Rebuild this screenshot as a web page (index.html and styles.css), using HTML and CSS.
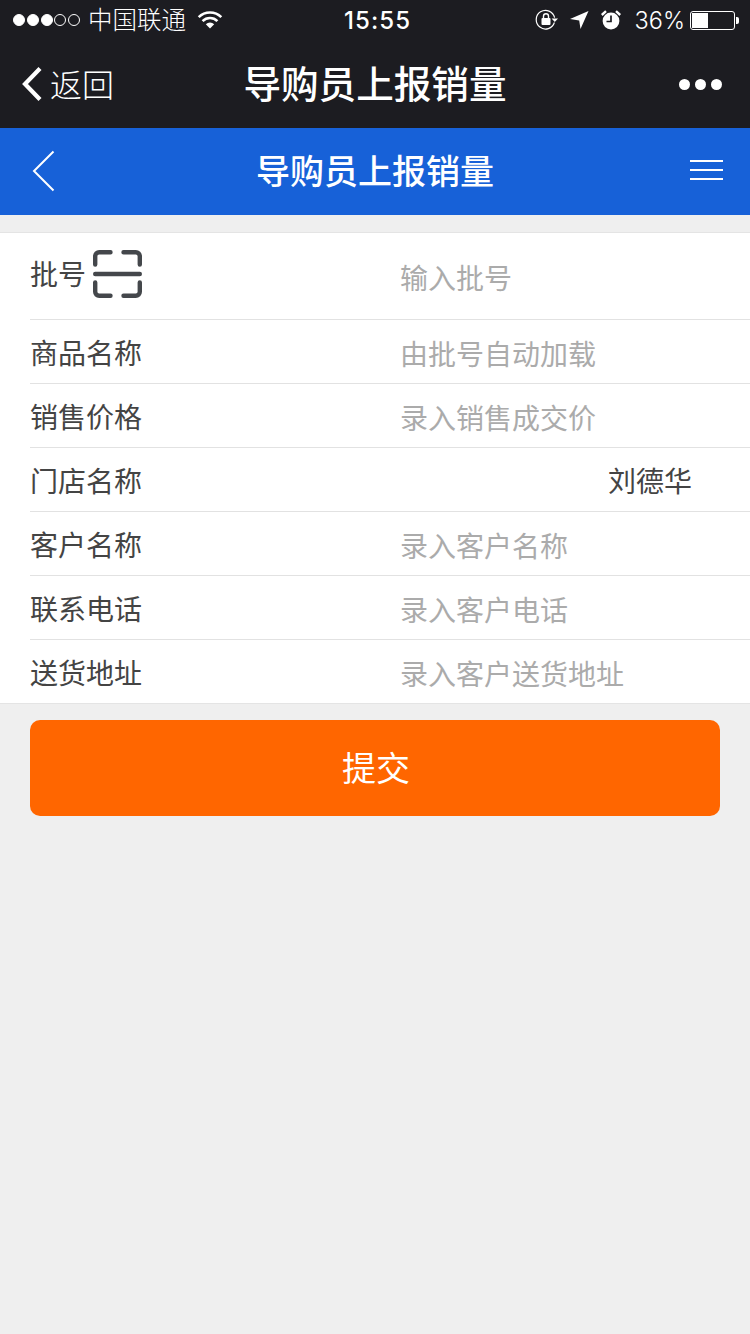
FILE: index.html
```html
<!DOCTYPE html>
<html lang="zh-CN">
<head>
    <meta charset="UTF-8">
    <meta name="viewport" content="width=device-width, initial-scale=1.0">
    <title>导购员上报销量</title>
    <link rel="stylesheet" href="styles.css">
</head>
<body>

    <div class="status-bar">
        <div class="status-left">
            <span class="signal">
                <i class="on"></i><i class="on"></i><i class="on"></i><i></i><i></i>
            </span>
            <span class="carrier">中国联通</span>
            <svg class="wifi" width="26" height="20" viewBox="0 0 26 20">
                <path d="M13 18.5 L8.8 14.3 A6 6 0 0 1 17.2 14.3 Z" fill="#fff"/>
                <path d="M5.6 11.1 A10.5 10.5 0 0 1 20.4 11.1" fill="none" stroke="#fff" stroke-width="2.6"/>
                <path d="M1.7 7.2 A16 16 0 0 1 24.3 7.2" fill="none" stroke="#fff" stroke-width="2.6"/>
            </svg>
        </div>
        <div class="status-time">15:55</div>
        <div class="status-right">
            <svg class="rotate-lock" width="24" height="22" viewBox="0 0 24 22">
                <path d="M19.4 13.5 A9.3 9.3 0 1 1 19.6 8.6" fill="none" stroke="#fff" stroke-width="1.2"/>
                <path d="M16.6 9.4 H23 L19.8 13 Z" fill="#fff"/>
                <rect x="6.5" y="9" width="9" height="7" rx="1" fill="#fff"/>
                <path d="M8.5 9 V7.2 A2.5 2.5 0 0 1 13.5 7.2 V9" fill="none" stroke="#fff" stroke-width="1.4"/>
            </svg>
            <svg class="location" width="20" height="20" viewBox="0 0 20 20">
                <path d="M19.5 1 L11.5 19 L10.2 10.4 L1 9 Z" fill="#fff"/>
            </svg>
            <svg class="alarm" width="20" height="20" viewBox="0 0 20 20">
                <circle cx="10" cy="11" r="8.4" fill="#fff"/>
                <path d="M10 5.5 V11.5 H5.5" fill="none" stroke="#1c1c21" stroke-width="1.7"/>
                <path d="M0.8 5 L5 1.2 M19.2 5 L15 1.2" stroke="#fff" stroke-width="2.4"/>
            </svg>
            <span class="battery-pct">36%</span>
            <span class="battery"><span class="battery-level"></span></span>
        </div>
    </div>

    <div class="wx-bar">
        <div class="wx-back">
            <svg width="24" height="38" viewBox="0 0 24 38">
                <path d="M20 3.5 L5 19 L20 34.5" fill="none" stroke="#fff" stroke-width="4.2"/>
            </svg>
            <span>返回</span>
        </div>
        <div class="wx-title">导购员上报销量</div>
        <div class="wx-more"><i></i><i></i><i></i></div>
    </div>

    <div class="page-bar">
        <svg class="page-back" width="24" height="42" viewBox="0 0 24 42">
            <path d="M21.5 1.5 L2 21 L21.5 40.5" fill="none" stroke="#fff" stroke-width="2"/>
        </svg>
        <div class="page-title">导购员上报销量</div>
        <div class="page-menu"><i></i><i></i><i></i></div>
    </div>

    <div class="form">
        <div class="row row-first">
            <div class="label label-scan">
                <span>批号</span>
                <svg class="scan" width="50" height="50" viewBox="0 0 50 50">
                    <path d="M18.5 3.2 H7.2 A4 4 0 0 0 3.2 7.2 V15.5 M31.5 3.2 H43.8 A4 4 0 0 1 47.8 7.2 V15.5 M3.2 33.5 V42.8 A4 4 0 0 0 7.2 46.8 H18.5 M47.8 33.5 V42.8 A4 4 0 0 1 43.8 46.8 H31.5" fill="none" stroke="#44474b" stroke-width="4.4" stroke-linecap="round"/>
                    <path d="M3.2 25 H47.8" stroke="#44474b" stroke-width="4.4" stroke-linecap="round"/>
                </svg>
            </div>
            <div class="value placeholder">输入批号</div>
        </div>
        <div class="row">
            <div class="label">商品名称</div>
            <div class="value placeholder">由批号自动加载</div>
        </div>
        <div class="row">
            <div class="label">销售价格</div>
            <div class="value placeholder">录入销售成交价</div>
        </div>
        <div class="row">
            <div class="label">门店名称</div>
            <div class="value store">刘德华</div>
        </div>
        <div class="row">
            <div class="label">客户名称</div>
            <div class="value placeholder">录入客户名称</div>
        </div>
        <div class="row">
            <div class="label">联系电话</div>
            <div class="value placeholder">录入客户电话</div>
        </div>
        <div class="row">
            <div class="label">送货地址</div>
            <div class="value placeholder">录入客户送货地址</div>
        </div>
    </div>

    <div class="submit-wrap">
        <div class="submit">提交</div>
    </div>

</body>
</html>
```

FILE: styles.css
```css
* {
    box-sizing: border-box;
}
html, body {
    margin: 0;
    padding: 0;
}
body {
    width: 750px;
    height: 1334px;
    overflow: hidden;
    background-color: #efefef;
    font-family: "Noto Sans CJK SC", "Liberation Sans", sans-serif;
    color: #444;
}

/* phone status bar */
.status-bar {
    height: 40px;
    padding: 0 15px 0 13px;
    background-color: #1c1c21;
    color: #fff;
    display: flex;
    align-items: center;
    justify-content: space-between;
    position: relative;
}
.status-left, .status-right {
    display: flex;
    align-items: center;
}
.signal {
    display: flex;
    gap: 1.75px;
}
.signal i {
    width: 12px;
    height: 12px;
    border: 1px solid #fff;
    border-radius: 50%;
}
.signal i.on {
    background-color: #fff;
}
.carrier {
    margin-left: 8px;
    margin-bottom: 2px;
    font-size: 24.5px;
    line-height: 38px;
    font-weight: 300;
}
.wifi {
    margin-left: 11px;
}
.status-time {
    position: absolute;
    left: 344px;
    top: 1px;
    font-family: "Inter", "Liberation Sans", sans-serif;
    font-size: 24px;
    line-height: 40px;
    font-weight: 500;
    letter-spacing: 1.1px;
}
.rotate-lock {
    margin-right: 10px;
}
.location {
    margin-right: 12px;
}
.alarm {
    margin-right: 14px;
}
.battery-pct {
    font-family: "Inter", "Liberation Sans", sans-serif;
    font-size: 23.5px;
    font-weight: 300;
    line-height: 40px;
    margin-top: 2px;
    margin-right: 5px;
}
.battery {
    width: 45px;
    height: 19px;
    border: 1px solid #fff;
    border-radius: 3px;
    padding: 1px;
    position: relative;
}
.battery::after {
    content: "";
    position: absolute;
    right: -5px;
    top: 5px;
    width: 3px;
    height: 7px;
    background-color: #fff;
    border-radius: 0 2px 2px 0;
}
.battery-level {
    display: block;
    width: 16px;
    height: 100%;
    background-color: #fff;
}

/* wechat nav bar */
.wx-bar {
    height: 88px;
    background-color: #1c1c21;
    color: #fff;
    display: flex;
    align-items: center;
    position: relative;
    padding: 0 28px 0 20px;
    justify-content: space-between;
}
.wx-back {
    display: flex;
    align-items: center;
    font-size: 32px;
    font-weight: 300;
}
.wx-back span {
    margin-left: 6px;
    margin-bottom: 2px;
}
.wx-title {
    position: absolute;
    left: 0;
    right: 0;
    margin-bottom: 6px;
    text-align: center;
    font-size: 37.6px;
    font-weight: 500;
}
.wx-more {
    display: flex;
    gap: 5px;
}
.wx-more i {
    width: 11px;
    height: 11px;
    border-radius: 50%;
    background-color: #fff;
}

/* page header */
.page-bar {
    height: 87px;
    background-color: #1761d8;
    color: #fff;
    display: flex;
    align-items: center;
    justify-content: space-between;
    position: relative;
    padding: 0 27px 0 32px;
}
.page-back {
    margin-bottom: 2px;
}
.page-title {
    position: absolute;
    left: 0;
    right: 0;
    margin-bottom: 4px;
    text-align: center;
    font-size: 34px;
    font-weight: 500;
}
.page-menu {
    display: flex;
    flex-direction: column;
    gap: 7px;
    margin-bottom: 3px;
}
.page-menu i {
    width: 33px;
    height: 2px;
    background-color: #fff;
}

/* form */
.form {
    margin-top: 17px;
    background-color: #fff;
    border-top: 1px solid #e4e4e4;
    border-bottom: 1px solid #e4e4e4;
    padding-left: 30px;
}
.row {
    height: 64px;
    display: flex;
    align-items: center;
    border-top: 1px solid #e2e2e2;
    font-size: 28px;
}
.row-first {
    height: 86px;
    border-top: 0;
}
.label {
    width: 370px;
    flex: none;
    color: #444;
}
.label-scan {
    display: flex;
    align-items: center;
    gap: 6px;
}
.label-scan span {
    margin-bottom: 6px;
}
.scan {
    margin-bottom: 4px;
}
.value {
    flex: 1;
    padding-top: 3px;
}
.row-first .value {
    padding-top: 2px;
}
.placeholder {
    color: #ababab;
}
.store {
    text-align: right;
    padding-right: 58px;
    padding-top: 0;
    color: #444;
}

.submit-wrap {
    padding: 16px 30px;
}
.submit {
    height: 96px;
    line-height: 94px;
    padding-left: 2px;
    background-color: #ff6600;
    border-radius: 10px;
    color: #fff;
    text-align: center;
    font-size: 34px;
}
```
